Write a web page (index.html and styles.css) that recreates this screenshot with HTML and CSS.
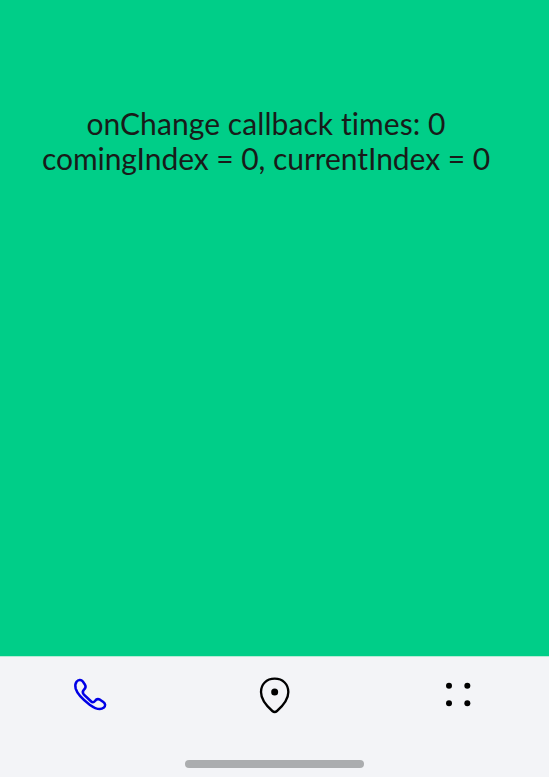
FILE: index.html
```html
<!DOCTYPE html>
<html lang="en">
<head>
<meta charset="utf-8">
<title>Tabs</title>
<link rel="stylesheet" href="styles.css">
</head>
<body>
<main class="content">
  <p class="line line-times">onChange callback times: 0</p>
  <p class="line line-index">comingIndex = 0, currentIndex = 0</p>
</main>
<nav class="bar">
  <div class="tabs">
    <div class="tab">
      <svg class="icon" viewBox="0 0 180 180" fill="none" stroke="#0000e6" stroke-width="7.5" stroke-linejoin="round"><path d="M50 50C54 44 64 43 68 49L75 59C79 65 77 69 72 74C67 79 67 83 71 88L92 108C97 113 101 113 105 108C109 102 114 101 120 104L130 111C137 116 137 123 131 128C122 136 107 132 89 119C69 104 51 84 47 71C45 63 45 56 50 50Z"/></svg>
    </div>
    <div class="tab">
      <svg class="icon" viewBox="0 0 180 180"><path d="M89 41C64 41 48 58 48 81C48 104 66 124 82 138Q89 144 96 138C112 124 130 104 130 81C130 58 114 41 89 41Z" fill="none" stroke="#000" stroke-width="7"/><circle cx="89" cy="81" r="10.5"/></svg>
    </div>
    <div class="tab">
      <svg class="icon" viewBox="0 0 180 180"><circle cx="57" cy="62" r="9"/><circle cx="112" cy="62" r="9"/><circle cx="57" cy="115" r="9"/><circle cx="112" cy="115" r="9"/></svg>
    </div>
  </div>
  <div class="handle"></div>
</nav>
</body>
</html>
```
FILE: styles.css
```css
body {
  margin: 0;
  height: 777px;
  display: flex;
  flex-direction: column;
  overflow: hidden;
  background: #f3f4f7;
}

.content {
  box-sizing: border-box;
  height: 656px;
  padding: 106px 17px 0 0;
  background: #00ce88;
  color: #181b19;
  font: 30px/35px Lato, "Liberation Sans", sans-serif;
  text-align: center;
}

.line {
  margin: 0;
  white-space: nowrap;
}

.line-times {
  letter-spacing: 0.08px;
}

.line-index {
  letter-spacing: -0.05px;
}

.bar {
  box-sizing: border-box;
  height: 121px;
  padding-top: 8px;
  border-top: 1px solid #b5ecd6;
}

.tabs {
  display: grid;
  grid-template-columns: 180px 190px 179px;
}

.tab {
  display: flex;
  justify-content: center;
}

.icon {
  width: 60px;
  height: 60px;
}

.handle {
  width: 179px;
  height: 8px;
  margin: 35px 0 0 184.5px;
  border-radius: 4px;
  background: #abadaf;
}
```
